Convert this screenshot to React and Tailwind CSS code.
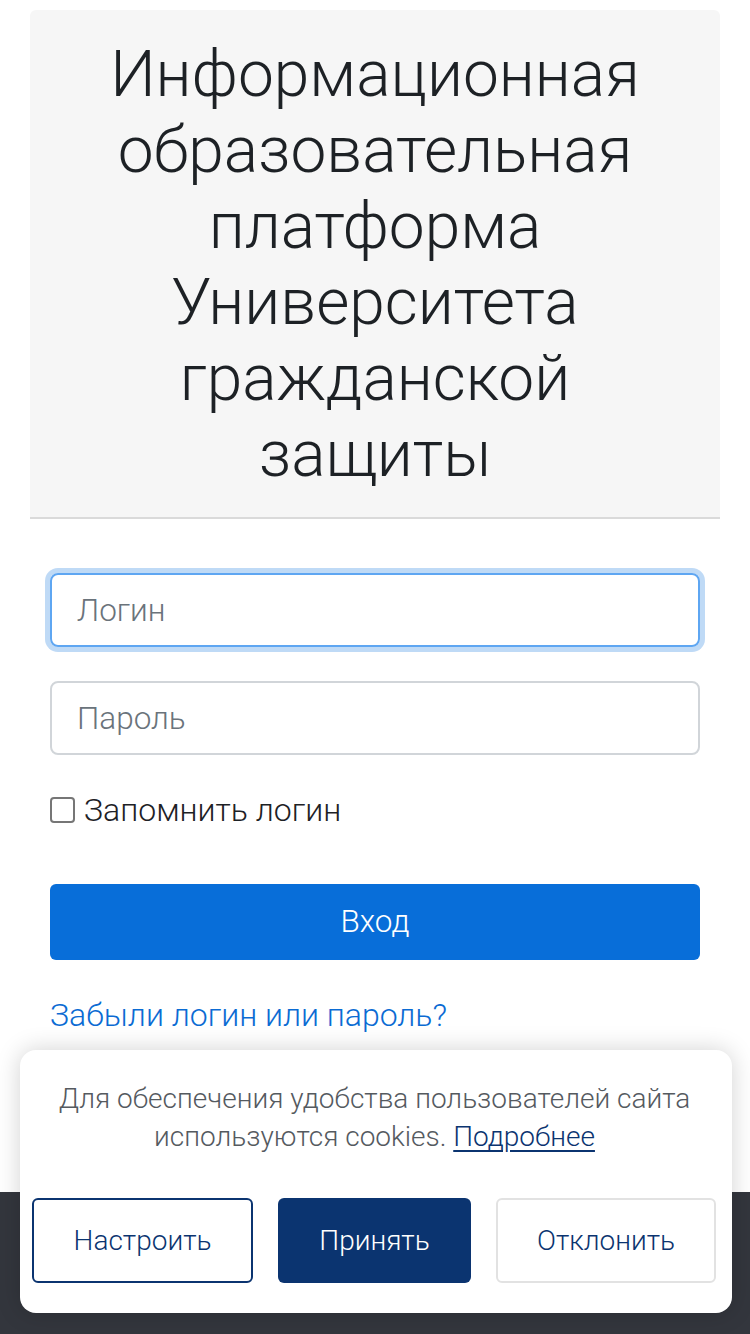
import React from 'react';

const NAVY = 'text-[#0b3470]';

const App = () => {
  return (
    <div className="relative min-h-[1334px] flex flex-col bg-white font-['Roboto',sans-serif]">
      <div className="px-[30px] pt-[10px]">
        {/* Title card */}
        <div className="bg-[#f6f6f6] rounded-t-[6px] border-b-2 border-[#dadada] px-[40px] pt-[27px] pb-[24px] text-center">
          <h1 className="text-[64px] leading-[76px] font-light text-[#1d2125]">
            Информационная образовательная платформа Университета гражданской защиты
          </h1>
        </div>

        {/* Login form */}
        <form className="px-[20px] pt-[54px]" onSubmit={(e) => e.preventDefault()}>
          <input
            type="text"
            placeholder="Логин"
            className="w-full h-[74px] px-[25px] rounded-[8px] border-2 border-[#5ea6f2] ring-[5px] ring-[#bfdaf6] outline-none text-[31.5px] font-light text-[#1d2125] placeholder:text-[#6a737b]"
          />
          <input
            type="password"
            placeholder="Пароль"
            className="mt-[34px] w-full h-[74px] px-[25px] rounded-[8px] border-2 border-[#d1d5d9] outline-none text-[31.5px] font-light text-[#1d2125] placeholder:text-[#6a737b]"
          />

          <label className="mt-[36px] flex items-center gap-[9px] text-[32px] leading-[38px] font-light text-[#1d2125]">
            <span className="w-[25px] h-[26px] shrink-0 rounded-[4px] border-2 border-[#767676] bg-white" />
            Запомнить логин
          </label>

          <button
            type="submit"
            className="mt-[55px] w-full h-[76px] rounded-[6px] bg-[#086ed9] text-white text-[31.5px] font-light"
          >
            Вход
          </button>

          <div className="mt-[36px] text-[32px] leading-[38px] font-light text-[#0b6bd3]">
            <a href="#">Забыли логин или пароль?</a>
          </div>
        </form>
      </div>

      {/* Footer */}
      <div className="mt-[158px] flex-1 bg-[#33363d]" />

      {/* Cookie banner */}
      <div className="absolute left-[20px] right-[18px] bottom-[21px] bg-white rounded-[16px] shadow-[0_0_24px_rgba(0,0,0,0.18)] pt-[30px] pb-[30px] pl-[12px] pr-[15px]">
        <p className="px-[16px] text-center text-[28px] leading-[38px] font-light text-[#555a5f]">
          Для обеспечения удобства пользователей сайта используются cookies.{' '}
          <a href="#" className="text-[#0b3470] underline underline-offset-[4px]">Подробнее</a>
        </p>
        <div className="mt-[42px] flex gap-[25px]">
          <button className={`w-[221px] h-[85px] rounded-[6px] border-2 border-[#0b3470] bg-white text-[28px] font-light ${NAVY}`}>
            Настроить
          </button>
          <button className="w-[193px] h-[85px] rounded-[6px] bg-[#0b3470] text-white text-[28px] font-light">
            Принять
          </button>
          <button className={`w-[220px] h-[85px] rounded-[6px] border-2 border-[#e2e2e2] bg-white text-[28px] font-light ${NAVY}`}>
            Отклонить
          </button>
        </div>
      </div>
    </div>
  );
};

export default App;
